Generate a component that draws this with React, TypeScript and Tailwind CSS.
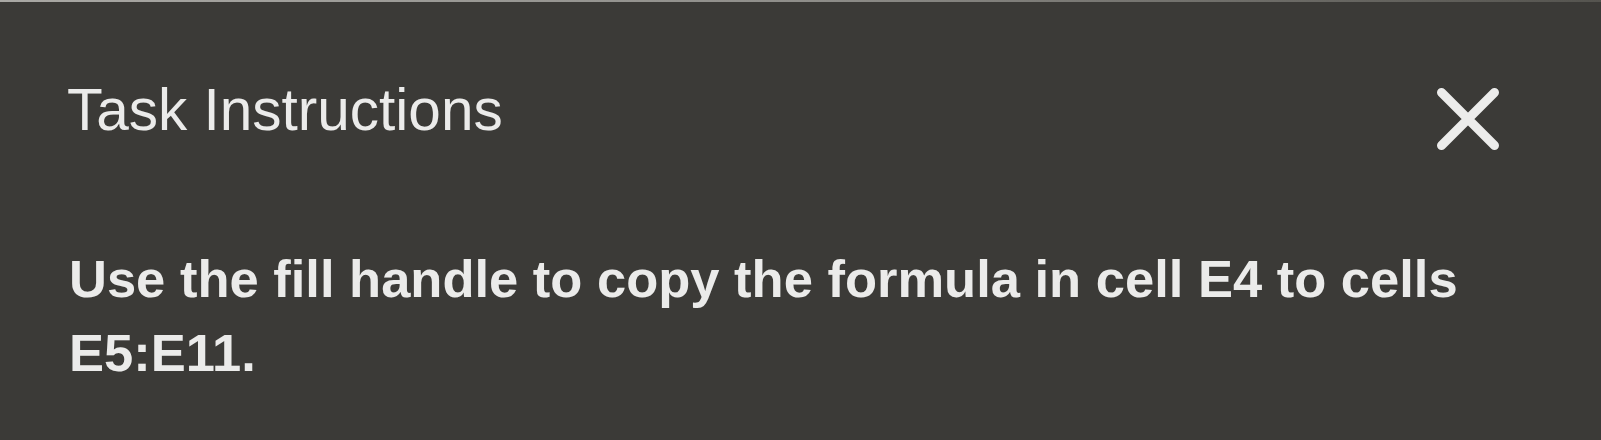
export default function App() {
  return (
    <div
      className="h-[440px] w-full overflow-hidden bg-[#3b3a37] text-[#ebebea]"
      style={{ fontFamily: '"Liberation Sans", Arial, sans-serif' }}
    >
      <div className="h-[2px] w-full bg-gradient-to-r from-[#a9a8a4] via-[#8f8e8a] to-[#55544f]" />
      <div className="flex items-start justify-between pl-[67px] pr-[101px] pt-[79px]">
        <h1 className="text-[58.5px] leading-[58px] font-normal">Task Instructions</h1>
        <button className="mt-[6px]" aria-label="Close">
          <svg width="64" height="64" viewBox="0 0 64 64" fill="none">
            <path d="M5.5 5.5L58.5 58.5M58.5 5.5L5.5 58.5" stroke="#ececeb" strokeWidth="9" strokeLinecap="round" />
          </svg>
        </button>
      </div>
      <p className="mt-[91px] pl-[69px] pr-[120px] text-[52.5px] leading-[74px] font-bold">
        Use the fill handle to copy the formula in cell E4 to cells E5:E11.
      </p>
    </div>
  )
}
